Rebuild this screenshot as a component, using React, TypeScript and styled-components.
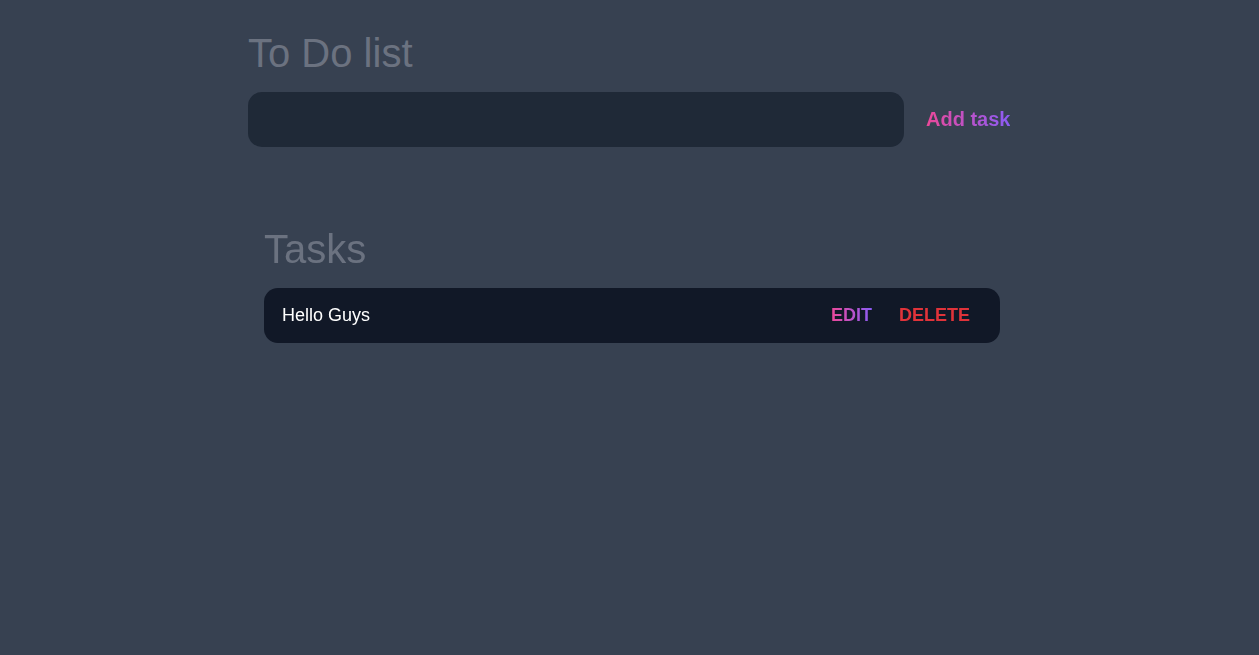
import React, { useState } from "react";
import styled, { createGlobalStyle } from "styled-components";

const Global = createGlobalStyle`
  html, body { margin: 0; padding: 0; background: #374151; }
  body { font-family: "Liberation Sans", Arial, sans-serif; min-height: 655px; }
  * { box-sizing: border-box; }
`;

const Page = styled.div`
  display: flex;
  justify-content: center;
  padding-left: 5px;
  padding-top: 30px;
`;

const Container = styled.div`
  width: 768px;
  display: flex;
  flex-direction: column;
`;

const Title = styled.h1`
  margin: 0;
  font-size: 40px;
  line-height: 46px;
  font-weight: 400;
  color: #6b7280;
`;

const Form = styled.form`
  display: flex;
  align-items: center;
  gap: 22px;
  margin-top: 16px;
`;

const Input = styled.input`
  width: 656px;
  height: 55px;
  border: none;
  outline: none;
  border-radius: 14px;
  background: #1f2937;
  color: #e5e7eb;
  caret-color: #9ca3af;
  padding: 0 20px;
  font-size: 18px;
  font-family: inherit;
`;

const GradientText = styled.span`
  background: linear-gradient(to right, #ec4899, #8b5cf6);
  -webkit-background-clip: text;
  background-clip: text;
  color: transparent;
`;

const AddButton = styled.button`
  border: none;
  background: none;
  padding: 0;
  font-family: inherit;
  font-size: 20px;
  font-weight: 700;
  cursor: pointer;
`;

const TasksSection = styled.section`
  padding: 0 16px;
  margin-top: 79px;
  display: flex;
  flex-direction: column;
  gap: 16px;
`;

const TaskRow = styled.div`
  height: 55px;
  display: flex;
  align-items: center;
  justify-content: space-between;
  background: #111827;
  border-radius: 14px;
  padding: 0 30px 0 18px;
`;

const TaskText = styled.span`
  color: #ffffff;
  font-size: 18px;
`;

const Actions = styled.div`
  display: flex;
  align-items: center;
  gap: 27px;
`;

const ActionButton = styled.button<{ $danger?: boolean }>`
  border: none;
  background: none;
  padding: 0;
  font-family: inherit;
  font-size: 18px;
  font-weight: 700;
  text-transform: uppercase;
  color: ${(p) => (p.$danger ? "#e0333a" : "inherit")};
  cursor: pointer;
`;

export default function App() {
  const [value, setValue] = useState("");
  const tasks = ["Hello Guys"];
  return (
    <>
      <Global />
      <Page>
        <Container>
          <Title>To Do list</Title>
          <Form onSubmit={(e) => e.preventDefault()}>
            <Input autoFocus value={value} onChange={(e) => setValue(e.target.value)} />
            <AddButton type="submit">
              <GradientText>Add task</GradientText>
            </AddButton>
          </Form>
          <TasksSection>
            <Title>Tasks</Title>
            {tasks.map((t) => (
              <TaskRow key={t}>
                <TaskText>{t}</TaskText>
                <Actions>
                  <ActionButton>
                    <GradientText>Edit</GradientText>
                  </ActionButton>
                  <ActionButton $danger>Delete</ActionButton>
                </Actions>
              </TaskRow>
            ))}
          </TasksSection>
        </Container>
      </Page>
    </>
  );
}
